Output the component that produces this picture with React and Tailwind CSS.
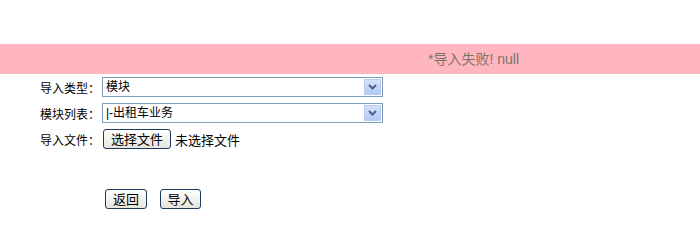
import React from 'react';

const font = { fontFamily: '"Liberation Sans", "Noto Sans CJK SC", sans-serif' };

const FakeSelect = ({ value }) => (
  <div className="flex h-[20px] w-[281px] items-center border border-[#7f9db9] bg-white pl-[3px] pr-[1px]">
    <span className="flex-1 text-[12px] leading-none text-black">{value}</span>
    <div className="flex h-[16px] w-[17px] items-center justify-center border border-[#b9cbf3] bg-gradient-to-b from-[#d6e2fc] to-[#b4c9f7]">
      <svg width="9" height="6" viewBox="0 0 9 6">
        <path d="M1 1 L4.5 4.5 L8 1" fill="none" stroke="#4d6185" strokeWidth="2" />
      </svg>
    </div>
  </div>
);

const XpButton = ({ children, className = '' }) => (
  <button
    className={`flex h-[20px] items-center justify-center rounded-[3px] border border-[#1c3a5e] bg-gradient-to-b from-white to-[#e6e5dc] text-[13px] leading-none text-black ${className}`}
  >
    {children}
  </button>
);

const Label = ({ children, w }) => (
  <span className={`${w} pt-[2px] text-[12px]`} style={{ fontFamily: '"Noto Sans CJK SC", sans-serif' }}>
    {children}
  </span>
);

const App = () => {
  return (
    <div className="h-[234px] w-[700px] bg-white" style={font}>
      <div className="h-[44px]" />

      {/* message bar */}
      <div className="flex h-[30px] items-center bg-[#ffb6c1] pl-[428px]">
        <span className="text-[14px] text-[#7d7468]">*导入失败! null</span>
      </div>

      {/* form */}
      <div className="flex flex-col pl-[40px] pt-[3px] text-[12px] text-black">
        <div className="flex h-[26px] items-start">
          <Label w="w-[62px]">导入类型：</Label>
          <FakeSelect value="模块" />
        </div>
        <div className="flex h-[26px] items-start">
          <Label w="w-[62px]">模块列表：</Label>
          <FakeSelect value="|-出租车业务" />
        </div>
        <div className="flex h-[26px] items-start">
          <Label w="w-[63px]">导入文件：</Label>
          <XpButton className="w-[68px]">选择文件</XpButton>
          <span className="ml-[4px] pt-[2px] text-[13px]">未选择文件</span>
        </div>
        <div className="flex gap-[13px] pl-[65px] pt-[34px]">
          <XpButton className="h-[19px] w-[42px]">返回</XpButton>
          <XpButton className="h-[19px] w-[41px]">导入</XpButton>
        </div>
      </div>
    </div>
  );
};

export default App;
